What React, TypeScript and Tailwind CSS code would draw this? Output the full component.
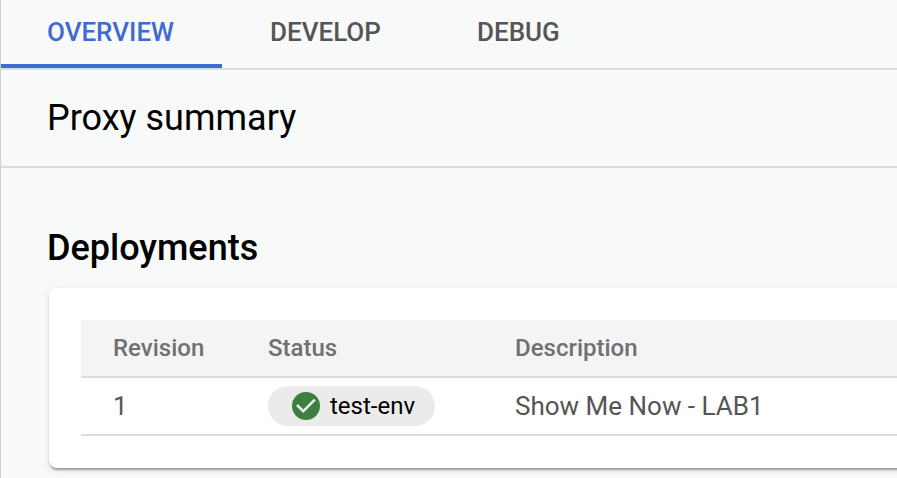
import React from "react";

const tabs = [
  { label: "OVERVIEW", active: true, box: "w-[221px] pl-[46px]" },
  { label: "DEVELOP", active: false, box: "w-[208px] pl-[48px]" },
  { label: "DEBUG", active: false, box: "w-[180px] pl-[47px]" },
];

function CheckBadge() {
  return (
    <svg width="30" height="30" viewBox="0 0 30 30" className="shrink-0">
      <circle cx="15" cy="15" r="14" fill="#3c803f" />
      <path d="M6 14l6.3 6.2L23.8 8.7" fill="none" stroke="#ebebeb" strokeWidth="2.5" />
    </svg>
  );
}

export default function App() {
  return (
    <div className="h-[478px] w-[897px] overflow-hidden border-l border-[#cdcfce] bg-[#f8faf9] font-['Roboto',sans-serif]">
      <nav className="flex h-[70px] border-b-2 border-[#dadcdb]">
        {tabs.map((t) => (
          <div
            key={t.label}
            className={`${t.box} h-[68px] pt-[14px] text-[26px] font-medium leading-[36px] ${
              t.active ? "border-b-4 border-[#3f6ad3] text-[#3f6ad3]" : "text-[#555555]"
            }`}
          >
            {t.label}
          </div>
        ))}
      </nav>
      <header className="h-[98px] border-b-2 border-[#dadcdb] pl-[46px] pt-[24px]">
        <h1 className="text-[36px] leading-[48px] text-black">Proxy summary</h1>
      </header>
      <h2 className="pl-[46px] pt-[56px] text-[36px] font-medium leading-[48px] text-black">Deployments</h2>
      <section className="ml-[48px] mt-[16px] h-[180px] w-[900px] rounded-lg bg-white pl-8 pt-8 shadow-[0_4px_2px_-2px_rgba(0,0,0,0.2),0_2px_2px_rgba(0,0,0,0.14),0_2px_6px_rgba(0,0,0,0.12)]">
        <div className="grid h-[58px] grid-cols-[187px_247px_1fr] items-center border-b-2 border-[#dcdcdc] bg-[#f4f4f4] text-[24px] font-medium text-[#707070]">
          <span className="pl-8">Revision</span>
          <span>Status</span>
          <span>Description</span>
        </div>
        <div className="grid h-[58px] grid-cols-[187px_247px_1fr] items-center border-b-2 border-[#dcdcdc] text-[26px] text-[#555555]">
          <span className="pl-8">1</span>
          <span className="flex h-10 w-[167px] items-center rounded-full bg-[#ebebeb] pl-[23px] text-[24px] text-black">
            <CheckBadge />
            <span className="ml-[9px]">test-env</span>
          </span>
          <span>Show Me Now - LAB1</span>
        </div>
      </section>
    </div>
  );
}
